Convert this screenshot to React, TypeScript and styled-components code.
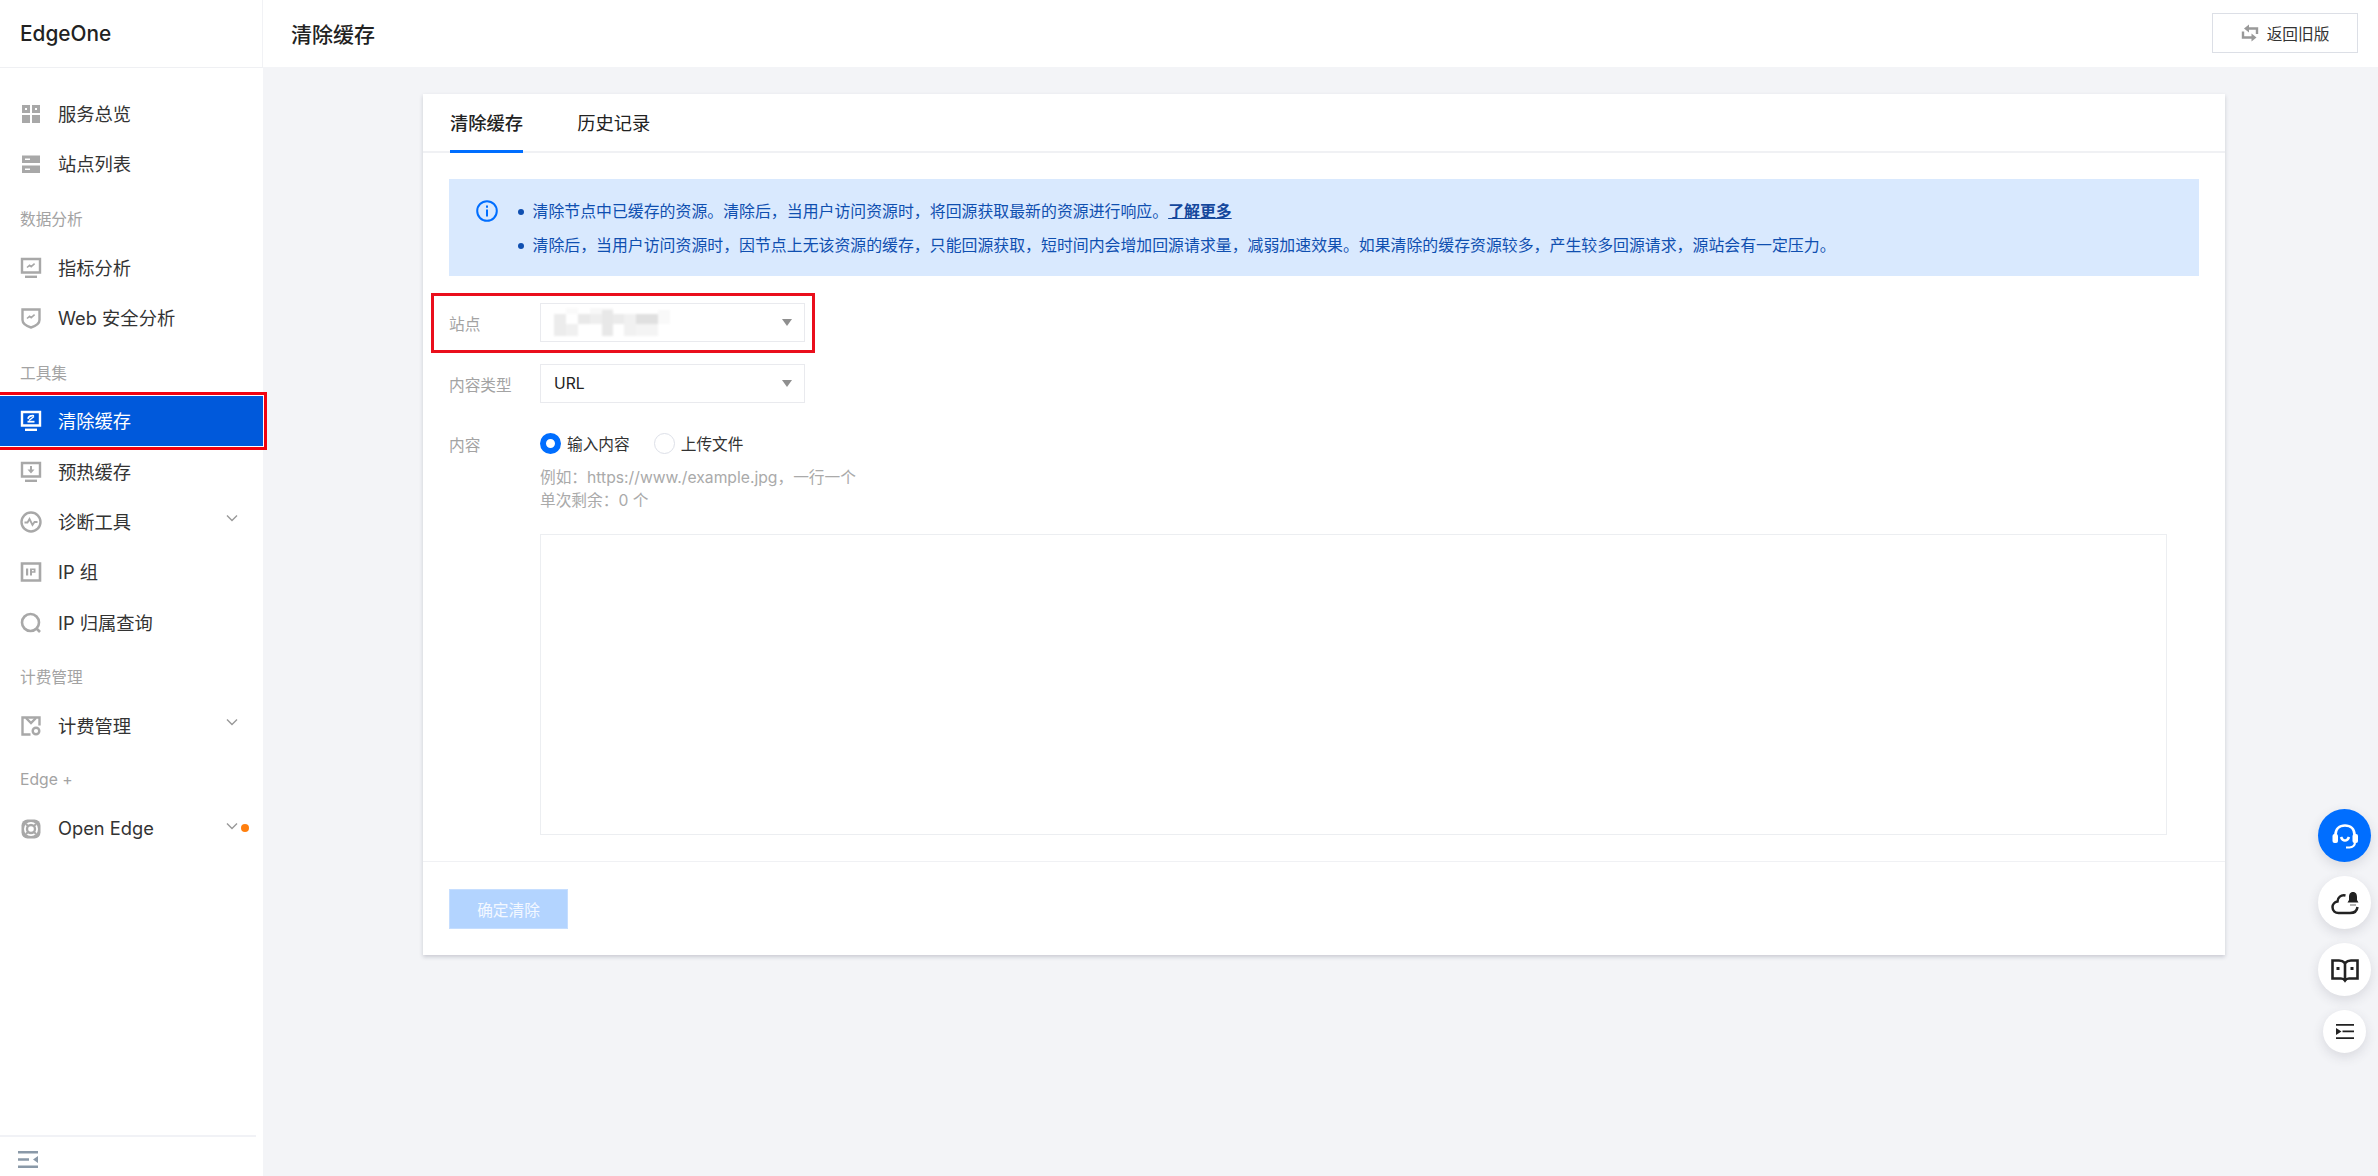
import React from "react";
import styled, { createGlobalStyle } from "styled-components";

const GlobalStyle = createGlobalStyle`
  html, body {
    margin: 0;
    padding: 0;
    height: 100%;
    background: #f3f4f7;
    color: #222;
    font-family: Inter, "Noto Sans CJK SC", "Liberation Sans", sans-serif;
    -webkit-font-smoothing: antialiased;
  }
  * {
    box-sizing: border-box;
  }
`;

const Page = styled.div`
  display: flex;
  height: 1176px;
  overflow: hidden;
`;

const Sidebar = styled.aside`
  display: flex;
  flex-direction: column;
  flex: 0 0 263px;
  background: #fff;
  position: relative;
  z-index: 2;
`;

const Brand = styled.div`
  display: flex;
  align-items: center;
  height: 68px;
  padding-left: 20px;
  font-size: 20.8px;
  font-weight: 500;
  color: #222;
  border-bottom: 1px solid #eff0f3;
  border-right: 1px solid #f1f2f5;
`;

const Nav = styled.nav`
  flex: 1;
  padding-top: 21px;
`;

const NavLabel = styled.div`
  display: flex;
  align-items: center;
  height: 53px;
  padding: 5px 0 0 20px;
  font-size: 15.7px;
  color: #a3a3a3;
`;

const NavItem = styled.div<{ $active?: boolean }>`
  display: flex;
  align-items: center;
  position: relative;
  height: 50.3px;
  padding: 0 25px 2px 20px;
  font-size: 18.3px;
  color: ${({ $active }) => ($active ? "#fff" : "#333")};
  background: ${({ $active }) => ($active ? "#0059db" : "transparent")};

  > svg:first-child {
    flex: 0 0 22px;
    width: 22px;
    height: 22px;
    margin-top: 2px;
    margin-right: 16px;
    color: ${({ $active }) => ($active ? "#fff" : "#a8a8a8")};
  }
`;

const Chevron = styled.svg`
  width: 12px;
  height: 8px;
  margin-left: auto;
  margin-bottom: 5px;
  color: #999;
`;

const Dot = styled.span`
  position: absolute;
  top: 20px;
  left: 241px;
  width: 8px;
  height: 8px;
  border-radius: 50%;
  background: #ff7f0e;
`;

const Highlight = styled.div`
  position: absolute;
  top: -4px;
  left: -5px;
  right: -4px;
  bottom: -4px;
  border: 3px solid #f2020f;
  box-shadow: inset 0 0 0 1px #fff;
  pointer-events: none;
`;

const SideFooter = styled.div`
  display: flex;
  align-items: center;
  height: 41px;
  margin-right: 7px;
  padding: 5px 0 0 18px;
  border-top: 2px solid #f1f2f6;
  color: #8a99a8;
`;

const Main = styled.main`
  display: flex;
  flex-direction: column;
  flex: 1;
  min-width: 0;
`;

const TopBar = styled.header`
  display: flex;
  align-items: center;
  justify-content: space-between;
  flex: 0 0 67px;
  padding: 0 20px 1px 28px;
  background: #fff;
`;

const PageTitle = styled.h1`
  margin: 0;
  font-size: 21px;
  font-weight: 500;
  color: #222;
`;

const OldVersionButton = styled.button`
  display: flex;
  align-items: center;
  justify-content: center;
  gap: 8px;
  width: 146px;
  height: 40px;
  padding: 0;
  background: #fff;
  border: 1px solid #dcdfe6;
  font: inherit;
  font-size: 15.7px;
  color: #333;
`;

const Card = styled.section`
  margin: 27px 153px 0 160px;
  background: #fff;
  box-shadow: 0 2px 4px rgba(54, 58, 80, 0.22);
`;

const Tabs = styled.div`
  display: flex;
  gap: 54px;
  height: 59px;
  padding-left: 27px;
  border-bottom: 2px solid #f0f1f4;
`;

const Tab = styled.div<{ $active?: boolean }>`
  display: flex;
  align-items: center;
  height: 59px;
  font-size: 18.3px;
  font-weight: ${({ $active }) => ($active ? 500 : 400)};
  color: #222;
  border-bottom: 3px solid ${({ $active }) => ($active ? "#006eff" : "transparent")};
`;

const CardBody = styled.div`
  padding: 26px 26px 26px;
`;

const Alert = styled.div`
  display: flex;
  height: 97px;
  padding: 16px 0 0 27px;
  background: #d9e9fe;
  color: #0f4fb0;
  font-size: 15.9px;

  > svg {
    flex: 0 0 22px;
    margin-top: 5px;
  }
`;

const AlertList = styled.ul`
  margin: 0;
  padding: 0 0 0 17px;
  list-style: none;
`;

const AlertLine = styled.li`
  position: relative;
  height: 34px;
  line-height: 34px;
  padding-left: 17.5px;
  white-space: nowrap;

  &::before {
    content: "";
    position: absolute;
    left: 3px;
    top: 14px;
    width: 6px;
    height: 6px;
    border-radius: 50%;
    background: #0f4fb0;
  }

  a {
    font-weight: 700;
    color: #14479c;
    text-decoration: underline;
  }
`;

const FormRow = styled.div<{ $gap: number }>`
  display: flex;
  position: relative;
  margin-top: ${({ $gap }) => $gap}px;
`;

const RowLabel = styled.div<{ $height: number }>`
  flex: 0 0 91px;
  height: ${({ $height }) => $height}px;
  padding-top: 2px;
  line-height: ${({ $height }) => $height}px;
  font-size: 15.7px;
  color: #a3a3a3;
`;

const Select = styled.div`
  display: flex;
  align-items: center;
  justify-content: space-between;
  width: 265px;
  height: 39px;
  padding: 0 12px 0 13px;
  border: 1px solid #e9eaee;
  background: #fff;
  font-size: 15.7px;
  color: #222;

  &::after {
    content: "";
    width: 0;
    height: 0;
    margin-left: auto;
    border-left: 5.5px solid transparent;
    border-right: 5.5px solid transparent;
    border-top: 7px solid #8f8f8f;
  }
`;

const SiteBox = styled.div`
  position: absolute;
  top: -10px;
  left: -18px;
  width: 384px;
  height: 60px;
  border: 3px solid #ea0f1c;
  pointer-events: none;
`;

const Field = styled.div`
  flex: 1;
  min-width: 0;
`;

const RadioGroup = styled.div`
  display: flex;
  align-items: center;
  gap: 24px;
  height: 21px;
`;

const RadioOption = styled.label`
  display: flex;
  align-items: center;
  gap: 6px;
  font-size: 15.7px;
  color: #333;
`;

const RadioMark = styled.span<{ $checked?: boolean }>`
  display: block;
  width: 21px;
  height: 21px;
  border-radius: 50%;
  background: #fff;
  border: ${({ $checked }) => ($checked ? "6px solid #006eff" : "1px solid #dde0e8")};
`;

const Hint = styled.div`
  height: 23px;
  line-height: 23px;
  font-size: 15.7px;
  color: #aaa;
`;

const Hints = styled.div`
  margin-top: 12px;
`;

const TextArea = styled.div`
  width: 1627px;
  height: 301px;
  margin-top: 22px;
  border: 1px solid #eceef1;
  background: #fff;
`;

const CardFooter = styled.div`
  padding: 27px 26px 26px;
  border-top: 1px solid #f0f1f4;
`;

const SubmitButton = styled.button`
  display: block;
  width: 119px;
  height: 40px;
  padding: 0;
  background: #b3d4ff;
  border: 1px solid #c6deff;
  color: #f3f8ff;
  font: inherit;
  font-size: 15.7px;
`;

const FloatStack = styled.div`
  position: fixed;
  top: 809px;
  right: 7px;
  z-index: 3;
  display: flex;
  flex-direction: column;
  align-items: center;
  gap: 14px;
`;

const FloatButton = styled.div<{ $primary?: boolean; $small?: boolean }>`
  display: flex;
  align-items: center;
  justify-content: center;
  width: ${({ $small }) => ($small ? 43 : 53)}px;
  height: ${({ $small }) => ($small ? 43 : 53)}px;
  border-radius: 50%;
  background: ${({ $primary }) => ($primary ? "#006eff" : "#fff")};
  color: ${({ $primary }) => ($primary ? "#fff" : "#222")};
  box-shadow: 0 4px 12px rgba(54, 58, 80, 0.14);
`;

const MosaicSvg = styled.svg`
  filter: blur(0.8px);
`;

const Icon = ({ children }: { children: React.ReactNode }) => (
  <svg viewBox="0 0 22 22" fill="none" stroke="currentColor" strokeWidth="2.4">
    {children}
  </svg>
);

const GridIcon = () => (
  <svg viewBox="0 0 22 22" fill="currentColor">
    <path
      fillRule="evenodd"
      d="M2 2h8v8H2zM5 5v2h2V5zM12 2h8v8h-8zM15 5v2h2V5z"
    />
    <path d="M2 12h8v8H2zM12 12h8v8h-8z" />
  </svg>
);

const ListIcon = () => (
  <svg viewBox="0 0 22 22" fill="currentColor">
    <path
      fillRule="evenodd"
      d="M2 2.500h18v7.500H2zM5 5.500v1.500h5V5.500zM2 12.500h18V20H2zM5 15.500V17h5v-1.500z"
    />
  </svg>
);

const ScreenChartIcon = () => (
  <Icon>
    <path d="M2 2h18v13.500H2z" />
    <path d="M5 19.800h12" />
    <path d="M7 10.500l2.600-2.200 1.600 1.400 3.400-3" strokeWidth="1.600" />
  </Icon>
);

const ShieldIcon = () => (
  <Icon>
    <path d="M2.500 2.500h17v10.500c0 3-4 6-8.500 7.500-4.500-1.500-8.500-4.500-8.500-7.500z" />
    <path d="M7 11.500l2.600-2.200 1.600 1.400 3.400-3" strokeWidth="1.600" />
  </Icon>
);

const ScreenPurgeIcon = () => (
  <Icon>
    <path d="M2 2h18v13.500H2z" />
    <path d="M5 19.800h12" />
    <path d="M7.500 11.700h7" strokeWidth="1.800" />
    <path d="M14 5.800c-2.800-.8-5.500.6-6 3" strokeWidth="1.800" />
    <path d="M14 6.500l-5 4" strokeWidth="1.400" />
  </Icon>
);

const ScreenDownIcon = () => (
  <Icon>
    <path d="M2 2h18v13.500H2z" />
    <path d="M5 19.800h12" />
    <path d="M11 5v5" strokeWidth="2" />
    <path d="M7.500 8.500h7L11 12.500z" fill="currentColor" stroke="none" />
  </Icon>
);

const PulseIcon = () => (
  <Icon>
    <circle cx="11" cy="11" r="9.500" />
    <path d="M4.500 11.500h3l2-3.500 3 6 2-3h3" strokeWidth="1.800" />
  </Icon>
);

const IpIcon = () => (
  <svg viewBox="0 0 22 22" fill="none">
    <path d="M2 2.500h18v17H2z" stroke="currentColor" strokeWidth="2.600" />
    <path d="M6 7.500h2.200v7H6z" fill="currentColor" />
    <path d="M10 7.500h5.500v4.300H12v2.700h-2zM12 9v1.300h1.700V9z" fill="currentColor" fillRule="evenodd" />
  </svg>
);

const SearchIcon = () => (
  <Icon>
    <circle cx="10.500" cy="10.500" r="8.500" strokeWidth="2.600" />
    <path d="M16.500 16.500l3.500 3.500" strokeWidth="2.600" />
  </Icon>
);

const BillingIcon = () => (
  <Icon>
    <path d="M10.500 19.500H2.500v-17h17V10.500" />
    <path d="M6 3l5 5 5-5" />
    <circle cx="16" cy="16" r="3.300" />
  </Icon>
);

const OrbitIcon = () => (
  <svg viewBox="0 0 22 22" fill="none">
    <rect x="1.500" y="1.500" width="19" height="19" rx="6" fill="currentColor" />
    <circle cx="11" cy="11" r="7" fill="#fff" />
    <circle cx="11" cy="11" r="4" stroke="currentColor" strokeWidth="2.400" />
    <path d="M6 6l2 2M16 6l-2 2M6 16l2-2M16 16l-2-2" stroke="currentColor" strokeWidth="2" />
  </svg>
);

const ChevronIcon = () => (
  <Chevron viewBox="0 0 12 8" fill="none" stroke="currentColor" strokeWidth="1.400">
    <path d="M1 1.500l5 5 5-5" />
  </Chevron>
);

const InfoIcon = () => (
  <svg width="22" height="22" viewBox="0 0 22 22" fill="none">
    <circle cx="11" cy="11" r="9.800" stroke="#006eff" strokeWidth="2" />
    <path d="M11 5.500v2.200M11 9.500v7" stroke="#006eff" strokeWidth="2" />
  </svg>
);

const SwitchIcon = () => (
  <svg width="18" height="18" viewBox="0 0 18 18" fill="none" stroke="#999" strokeWidth="2.400">
    <path d="M16 10V4.500H6" />
    <path d="M2 7.500v6h10" />
    <path d="M8 .5v8L3 4.500z" fill="#999" stroke="none" />
    <path d="M10.500 9.500v8l5-4z" fill="#999" stroke="none" />
  </svg>
);

const CollapseIcon = () => (
  <svg width="20" height="17" viewBox="0 0 20 17" fill="currentColor">
    <path d="M0 0h20v2.500H0zM0 7.200h11v2.500H0zM0 14.500h20V17H0zM20 5v7l-5-3.500z" />
  </svg>
);

const HeadsetIcon = () => (
  <svg width="30" height="30" viewBox="0 0 30 30" fill="none" stroke="currentColor" strokeWidth="2.600">
    <path d="M5.500 14C5.500 8 9.500 4.500 15 4.500S24.500 8 24.500 14" />
    <rect x="2.500" y="13" width="5.500" height="9" rx="2" fill="currentColor" stroke="none" />
    <rect x="22.500" y="13" width="5.500" height="9" rx="2" fill="currentColor" stroke="none" />
    <path d="M11 16c1 2.500 2.500 3.500 4 3.500s3-1 4-3.500" />
    <path d="M25 21c0 3.500-2.500 5.500-5.500 5.500H16" strokeWidth="2.200" />
  </svg>
);

const CloudBellIcon = () => (
  <svg width="30" height="30" viewBox="0 0 30 30" fill="none">
    <path
      d="M15.500 7.500C11 6.500 7.500 9.500 7.500 13.500 4.500 14 2.500 16.500 2.500 19c0 4 3 6 6 6H20c4.500 0 7-2 7.500-6"
      stroke="currentColor"
      strokeWidth="2.500"
    />
    <path
      d="M23 4c-3 0-4 2.500-4 5v3l-1.500 2.500h11L27 12V9c0-2.500-1-5-4-5z"
      fill="currentColor"
    />
    <path d="M20 17h6" stroke="#999" strokeWidth="1.500" />
  </svg>
);

const BookIcon = () => (
  <svg width="30" height="30" viewBox="0 0 30 30" fill="none" stroke="currentColor" strokeWidth="2.600">
    <path d="M15 8c-2-2-4-2.500-6-2.500H2.500v18H11c2 0 3 .5 4 2 1-1.500 2-2 4-2h8.500v-18H21c-2 0-4 .5-6 2.500z" />
    <path d="M15 8v17" />
    <path d="M6.500 13.500h3M20.500 13.500h3" strokeWidth="3" />
  </svg>
);

const IndentIcon = () => (
  <svg width="18" height="15" viewBox="0 0 18 15" fill="currentColor">
    <path d="M0 0h18v1.700H0zM6.500 6.600H18v1.700H6.500zM0 13.300h18V15H0zM0 4v7l5.500-3.500z" />
  </svg>
);

const BlurredSite = () => (
  <MosaicSvg width="118" height="30" viewBox="0 0 118 30" aria-hidden="true">
    <rect x="12" y="0" width="12" height="6" fill="#fafafa" />
    <rect x="36" y="0" width="23" height="6" fill="#f8f8f8" />
    <rect x="0" y="6" width="12" height="22" fill="#ececec" />
    <rect x="12" y="16" width="12" height="12" fill="#f0f0f0" />
    <rect x="24" y="6" width="12" height="10" fill="#e9e9e9" />
    <rect x="36" y="6" width="12" height="10" fill="#eeeeee" />
    <rect x="48" y="2" width="11" height="26" fill="#e8e8e8" />
    <rect x="59" y="6" width="11" height="10" fill="#ebebeb" />
    <rect x="70" y="6" width="12" height="22" fill="#f1f1f1" />
    <rect x="82" y="6" width="22" height="10" fill="#e0e0e0" />
    <rect x="82" y="16" width="22" height="12" fill="#f4f4f4" />
    <rect x="104" y="2" width="12" height="14" fill="#f9f9f9" />
  </MosaicSvg>
);

const App: React.FC = () => {
  return (
    <Page>
      <GlobalStyle />
      <Sidebar>
        <Brand>EdgeOne</Brand>
        <Nav>
          <NavItem><GridIcon />服务总览</NavItem>
          <NavItem><ListIcon />站点列表</NavItem>
          <NavLabel>数据分析</NavLabel>
          <NavItem><ScreenChartIcon />指标分析</NavItem>
          <NavItem><ShieldIcon />Web 安全分析</NavItem>
          <NavLabel>工具集</NavLabel>
          <NavItem $active>
            <ScreenPurgeIcon />清除缓存
            <Highlight />
          </NavItem>
          <NavItem><ScreenDownIcon />预热缓存</NavItem>
          <NavItem><PulseIcon />诊断工具<ChevronIcon /></NavItem>
          <NavItem><IpIcon />IP 组</NavItem>
          <NavItem><SearchIcon />IP 归属查询</NavItem>
          <NavLabel>计费管理</NavLabel>
          <NavItem><BillingIcon />计费管理<ChevronIcon /></NavItem>
          <NavLabel>Edge +</NavLabel>
          <NavItem>
            <OrbitIcon />Open Edge<ChevronIcon />
            <Dot />
          </NavItem>
        </Nav>
        <SideFooter><CollapseIcon /></SideFooter>
      </Sidebar>

      <Main>
        <TopBar>
          <PageTitle>清除缓存</PageTitle>
          <OldVersionButton><SwitchIcon />返回旧版</OldVersionButton>
        </TopBar>

        <Card>
          <Tabs>
            <Tab $active>清除缓存</Tab>
            <Tab>历史记录</Tab>
          </Tabs>

          <CardBody>
            <Alert>
              <InfoIcon />
              <AlertList>
                <AlertLine>
                  清除节点中已缓存的资源。清除后，当用户访问资源时，将回源获取最新的资源进行响应。<a>了解更多</a>
                </AlertLine>
                <AlertLine>
                  清除后，当用户访问资源时，因节点上无该资源的缓存，只能回源获取，短时间内会增加回源请求量，减弱加速效果。如果清除的缓存资源较多，产生较多回源请求，源站会有一定压力。
                </AlertLine>
              </AlertList>
            </Alert>

            <FormRow $gap={27}>
              <RowLabel $height={39}>站点</RowLabel>
              <Select><BlurredSite /></Select>
              <SiteBox />
            </FormRow>

            <FormRow $gap={22}>
              <RowLabel $height={39}>内容类型</RowLabel>
              <Select>URL</Select>
            </FormRow>

            <FormRow $gap={30}>
              <RowLabel $height={21}>内容</RowLabel>
              <Field>
                <RadioGroup>
                  <RadioOption><RadioMark $checked />输入内容</RadioOption>
                  <RadioOption><RadioMark />上传文件</RadioOption>
                </RadioGroup>
                <Hints>
                  <Hint>例如：https://www./example.jpg，一行一个</Hint>
                  <Hint>单次剩余：0 个</Hint>
                </Hints>
                <TextArea />
              </Field>
            </FormRow>
          </CardBody>

          <CardFooter>
            <SubmitButton>确定清除</SubmitButton>
          </CardFooter>
        </Card>
      </Main>

      <FloatStack>
        <FloatButton $primary><HeadsetIcon /></FloatButton>
        <FloatButton><CloudBellIcon /></FloatButton>
        <FloatButton><BookIcon /></FloatButton>
        <FloatButton $small><IndentIcon /></FloatButton>
      </FloatStack>
    </Page>
  );
};

export default App;
